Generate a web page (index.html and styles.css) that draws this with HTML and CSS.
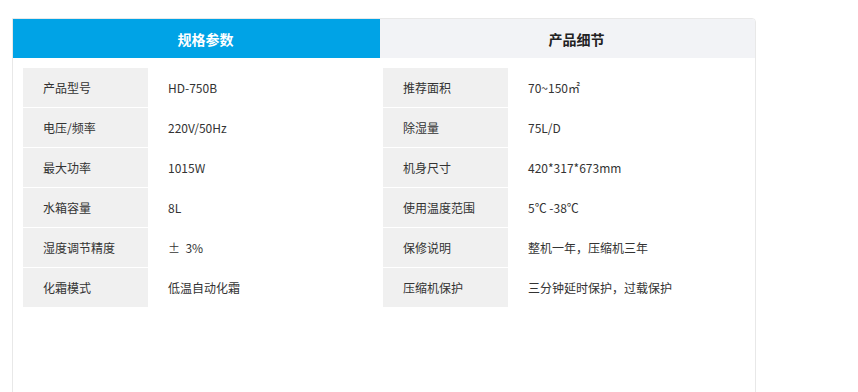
FILE: index.html
```html
<!DOCTYPE html>
<html lang="zh">
<head>
<meta charset="utf-8">
<link rel="stylesheet" href="styles.css">
</head>
<body>
<div class="page">
  <div class="panel">
    <div class="tabs">
      <div class="tab tab-active">规格参数</div>
      <div class="tab tab-plain">产品细节</div>
    </div>
    <div class="body">
      <div class="spec">
        <div class="row"><div class="label">产品型号</div><div class="value">HD-750B</div></div>
        <div class="row"><div class="label">电压/频率</div><div class="value">220V/50Hz</div></div>
        <div class="row"><div class="label">最大功率</div><div class="value">1015W</div></div>
        <div class="row"><div class="label">水箱容量</div><div class="value">8L</div></div>
        <div class="row"><div class="label">湿度调节精度</div><div class="value">±&nbsp;&nbsp;3%</div></div>
        <div class="row"><div class="label">化霜模式</div><div class="value">低温自动化霜</div></div>
      </div>
      <div class="spec">
        <div class="row"><div class="label">推荐面积</div><div class="value">70~150㎡</div></div>
        <div class="row"><div class="label">除湿量</div><div class="value">75L/D</div></div>
        <div class="row"><div class="label">机身尺寸</div><div class="value">420*317*673mm</div></div>
        <div class="row"><div class="label">使用温度范围</div><div class="value">5℃ -38℃</div></div>
        <div class="row"><div class="label">保修说明</div><div class="value">整机一年，压缩机三年</div></div>
        <div class="row"><div class="label">压缩机保护</div><div class="value">三分钟延时保护，过载保护</div></div>
      </div>
    </div>
  </div>
</div>
</body>
</html>
```

FILE: styles.css
```css
html, body {
  margin: 0;
  padding: 0;
  background: #ffffff;
  overflow: hidden;
}
body {
  font-family: "Noto Sans CJK SC", "Noto Sans", sans-serif;
  font-size: 12px;
  color: #333333;
}
.page {
  padding: 18px 0 0 12px;
}
.panel {
  width: 742px;
  height: 390px;
  border: 1px solid #e8e8e8;
  border-top-right-radius: 4px;
  overflow: hidden;
  background: #ffffff;
}
.tabs {
  display: flex;
  height: 39px;
}
.tab {
  display: flex;
  align-items: center;
  justify-content: center;
  font-size: 14px;
  font-weight: bold;
  padding-left: 18px;
  box-sizing: border-box;
}
.tab-active {
  width: 367px;
  background: #00a3e6;
  color: #ffffff;
}
.tab-plain {
  flex: 1;
  background: #f2f3f6;
  color: #222222;
}
.body {
  display: flex;
  gap: 3px;
  padding: 10px 10px 0 10px;
}
.spec {
  display: flex;
  flex-direction: column;
}
.spec:first-child {
  width: 357px;
}
.spec:last-child {
  width: 362px;
}
.row {
  display: flex;
  height: 40px;
  border-bottom: 1px solid #ffffff;
  box-sizing: border-box;
}
.label {
  width: 125px;
  background: #f0f0f0;
  padding-left: 20px;
  box-sizing: border-box;
  display: flex;
  align-items: center;
}
.value {
  flex: 1;
  padding-left: 20px;
  display: flex;
  align-items: center;
}
```
